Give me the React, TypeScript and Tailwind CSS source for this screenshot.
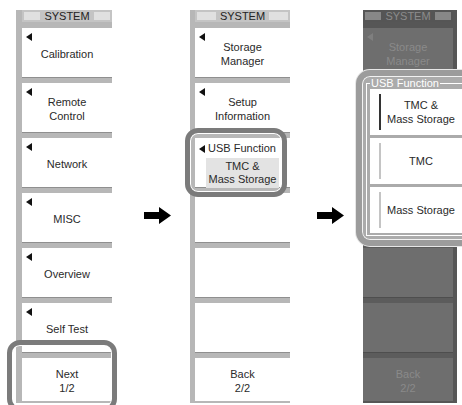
const font = "font-['Liberation_Sans',Arial,sans-serif]";

function Tri({ dark = false }: { dark?: boolean }) {
  return (
    <svg width="6" height="8" viewBox="0 0 6 8" className="block">
      <polygon points="6,0 6,8 0,4" fill={dark ? "#7f7f7f" : "#111"} />
    </svg>
  );
}

function Arrow() {
  return (
    <svg width="27" height="17" viewBox="0 0 27 17" className="block">
      <polygon points="0,5 15,5 15,0 27,8.5 15,17 15,12 0,12" fill="#000" />
    </svg>
  );
}

function Header({ dark = false }: { dark?: boolean }) {
  return (
    <div className={`flex items-center h-[12px] px-[2px] ${dark ? "bg-[#555]" : "bg-[#c4c4c4]"}`}>
      <div className={`flex-1 h-[8px] ${dark ? "bg-[#878787]" : "bg-[#e0e0e0]"}`} />
      <div className={`px-[4px] text-[11px] leading-[12px] ${dark ? "text-[#8c8c8c]" : "text-[#222]"}`}>SYSTEM</div>
      <div className={`flex-1 h-[8px] ${dark ? "bg-[#878787]" : "bg-[#e0e0e0]"}`} />
    </div>
  );
}

function Btn({
  lines,
  arrow = true,
  h = 49,
  dark = false,
}: {
  lines?: string[];
  arrow?: boolean;
  h?: number;
  dark?: boolean;
}) {
  return (
    <div
      className={`relative flex items-center justify-center ${dark ? "bg-[#6e6e6e]" : "bg-white"}`}
      style={{ height: h }}
    >
      {arrow && (
        <div className="absolute left-[4px] top-[5px]">
          <Tri dark={dark} />
        </div>
      )}
      {lines && (
        <div className={`text-center text-[11px] leading-[14px] pt-[3px] ${dark ? "text-[#8a8a8a]" : "text-[#2a2a2a]"}`}>
          {lines.map((l) => (
            <div key={l}>{l}</div>
          ))}
        </div>
      )}
    </div>
  );
}

function Sep({ dark = false }: { dark?: boolean }) {
  return (
    <div
      className={`h-[6px] border-t ${dark ? "bg-[#5c5c5c] border-[#4e4e4e]" : "bg-[#b7b7b7] border-[#8f8f8f]"}`}
    />
  );
}

export default function App() {
  return (
    <div className={`relative w-[462px] h-[405px] bg-white overflow-hidden flex ${font}`}>
      {/* Panel 1 */}
      <div className="ml-[16px] mt-[10px] w-[96px] h-[393px] bg-[#b7b7b7] pl-[6px] flex flex-col">
        <Header />
        <div className="h-[6px]" />
        <Btn lines={["Calibration"]} />
        <Sep />
        <Btn lines={["Remote", "Control"]} />
        <Sep />
        <Btn lines={["Network"]} />
        <Sep />
        <Btn lines={["MISC"]} />
        <Sep />
        <Btn lines={["Overview"]} />
        <Sep />
        <Btn lines={["Self Test"]} />
        <Sep />
        <Btn lines={["Next", "1/2"]} arrow={false} h={43} />
      </div>

      <div className="w-[78px] pl-[32px] pt-[207px]">
        <Arrow />
      </div>

      {/* Panel 2 */}
      <div className="mt-[10px] w-[100px] h-[393px] bg-[#b7b7b7] pl-[5px] flex flex-col">
        <Header />
        <div className="h-[6px]" />
        <Btn lines={["Storage", "Manager"]} />
        <Sep />
        <Btn lines={["Setup", "Information"]} />
        <Sep />
        <div className="relative h-[49px] bg-white flex flex-col">
          <div className="flex items-center gap-[3px] pl-[4px] pt-[4px] text-[11px] leading-[13px] text-[#2a2a2a]">
            <Tri />
            <span>USB Function</span>
          </div>
          <div className="mx-[11px] mt-[3px] bg-[#e3e3e3] text-center text-[11px] leading-[13px] text-[#2a2a2a] py-[2px]">
            <div>TMC &amp;</div>
            <div>Mass Storage</div>
          </div>
        </div>
        <Sep />
        <Btn arrow={false} />
        <Sep />
        <Btn arrow={false} />
        <Sep />
        <Btn arrow={false} />
        <Sep />
        <Btn lines={["Back", "2/2"]} arrow={false} h={43} />
      </div>

      <div className="w-[73px] pl-[27px] pt-[207px]">
        <Arrow />
      </div>

      {/* Panel 3 (dimmed) */}
      <div className="mt-[10px] w-[94px] h-[393px] bg-[#565656] pr-[4px] flex flex-col">
        <Header dark />
        <div className="h-[6px]" />
        <Btn lines={["Storage", "Manager"]} dark />
        <Sep dark />
        <Btn dark arrow={false} />
        <Sep dark />
        <Btn dark arrow={false} />
        <Sep dark />
        <Btn dark arrow={false} />
        <Sep dark />
        <Btn dark arrow={false} />
        <Sep dark />
        <Btn dark arrow={false} />
        <Sep dark />
        <Btn lines={["Back", "2/2"]} arrow={false} h={43} dark />
      </div>

      {/* Highlight: Next */}
      <div className="absolute left-[7px] top-[340px] w-[110px] h-[72px] rounded-[13px] border-[5px] border-[#7b7b7b] shadow-[inset_0_0_0_1px_#ffffff]" />

      {/* Highlight: USB Function */}
      <div className="absolute left-[185px] top-[128px] w-[102px] h-[69px] rounded-[13px] border-[5px] border-[#7b7b7b] shadow-[inset_0_0_0_1px_#ffffff]" />

      {/* USB Function popup */}
      <div className="absolute left-[356px] top-[70px] w-[130px] h-[176px] rounded-[14px] border-[6px] border-[#9c9c9c] bg-[#ababab] shadow-[0_0_0_1px_#e6e6e6,inset_0_0_0_1px_#f2f2f2]">
        <div className="absolute left-[4px] top-[7px] right-[-10px] bottom-[4px] border border-white" />
        <div className="absolute left-[8px] top-[1px] px-[1px] bg-[#ababab] text-[11px] leading-[13px] text-white">
          USB Function
        </div>
        <div className="absolute left-[8px] top-[13px] w-[110px] flex flex-col gap-[3px]">
          {[["TMC &", "Mass Storage"], ["TMC"], ["Mass Storage"]].map((l, i) => (
            <div key={i} className="relative h-[46px] bg-white flex items-center justify-center pl-[8px] pr-[16px]">
              <div
                className={`absolute left-[9px] top-[5px] bottom-[5px] w-[2px] ${i === 0 ? "bg-[#333]" : "bg-[#c4c4c4]"}`}
              />
              <div className="text-center text-[11px] leading-[14px] text-[#2a2a2a]">
                {l.map((t) => (
                  <div key={t}>{t}</div>
                ))}
              </div>
            </div>
          ))}
        </div>
      </div>
    </div>
  );
}
